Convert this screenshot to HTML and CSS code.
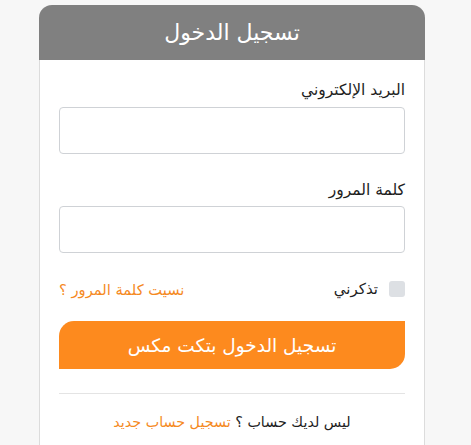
FILE: index.html
```html
<!DOCTYPE html>
<html lang="ar">
<head>
<meta charset="utf-8">
<link rel="stylesheet" href="styles.css">
</head>
<body>
<div class="card" dir="rtl">
  <div class="card-header">تسجيل الدخول</div>
  <form class="card-body">
    <label class="field-label">البريد الإلكتروني</label>
    <input class="field-input" type="text">
    <label class="field-label second">كلمة المرور</label>
    <input class="field-input" type="password">
    <div class="options-row">
      <label class="remember"><span class="checkbox"></span><span>تذكرني</span></label>
      <a class="forgot">نسيت كلمة المرور ؟</a>
    </div>
    <button class="submit" type="button">تسجيل الدخول بتكت مكس</button>
    <hr class="divider">
    <p class="signup">ليس لديك حساب ؟ <a class="signup-link">تسجيل حساب جديد</a></p>
  </form>
</div>
</body>
</html>
```
FILE: styles.css
```css
html, body {
  margin: 0;
  padding: 0;
  background: #f7f7f7;
  font-family: "DejaVu Sans", "Noto Sans", sans-serif;
}
body {
  height: 445px;
  overflow: hidden;
}
.card {
  margin: 5px 0 0 39px;
  width: 386px;
  background: #fff;
  border: 1px solid #dcdcdc;
  border-top: none;
  border-radius: 13px 13px 0 0;
  height: 460px;
  box-sizing: border-box;
}
.card-header {
  background: #808080;
  color: #fff;
  height: 55px;
  margin: 0 -1px;
  border-radius: 13px 13px 0 0;
  display: flex;
  align-items: center;
  justify-content: center;
  font-size: 22px;
}
.card-body {
  display: flex;
  flex-direction: column;
  padding: 20px 19px 0;
}
.field-label {
  font-size: 15.5px;
  line-height: 20px;
  color: #1e1e1e;
  margin-bottom: 7px;
}
.field-label.second {
  margin-top: 26px;
  margin-bottom: 6px;
}
.field-input {
  height: 47px;
  box-sizing: border-box;
  border: 1px solid #cfd2d6;
  border-radius: 4px;
  background: #fff;
  outline: none;
}
.options-row {
  margin-top: 26px;
  height: 20px;
  display: flex;
  justify-content: space-between;
  align-items: center;
  font-size: 14.7px;
}
.remember {
  display: flex;
  align-items: center;
  gap: 11px;
  color: #1e1e1e;
  font-size: 15px;
}
.checkbox {
  width: 16px;
  height: 16px;
  border-radius: 3px;
  background: #dde0e4;
}
.forgot {
  color: #f58a1f;
}
.submit {
  margin-top: 22px;
  height: 48px;
  border: none;
  background: #fd8a1e;
  color: #fff;
  font-family: inherit;
  font-size: 18.5px;
  border-radius: 15px 0 15px 0;
  cursor: pointer;
}
.divider {
  margin: 24px 0 0;
  border: none;
  border-top: 1px solid #e4e4e4;
  height: 0;
}
.signup {
  margin: 18px 0 0;
  text-align: center;
  font-size: 14.3px;
  line-height: 20px;
  color: #1e1e1e;
}
.signup-link {
  color: #f58a1f;
}
```
